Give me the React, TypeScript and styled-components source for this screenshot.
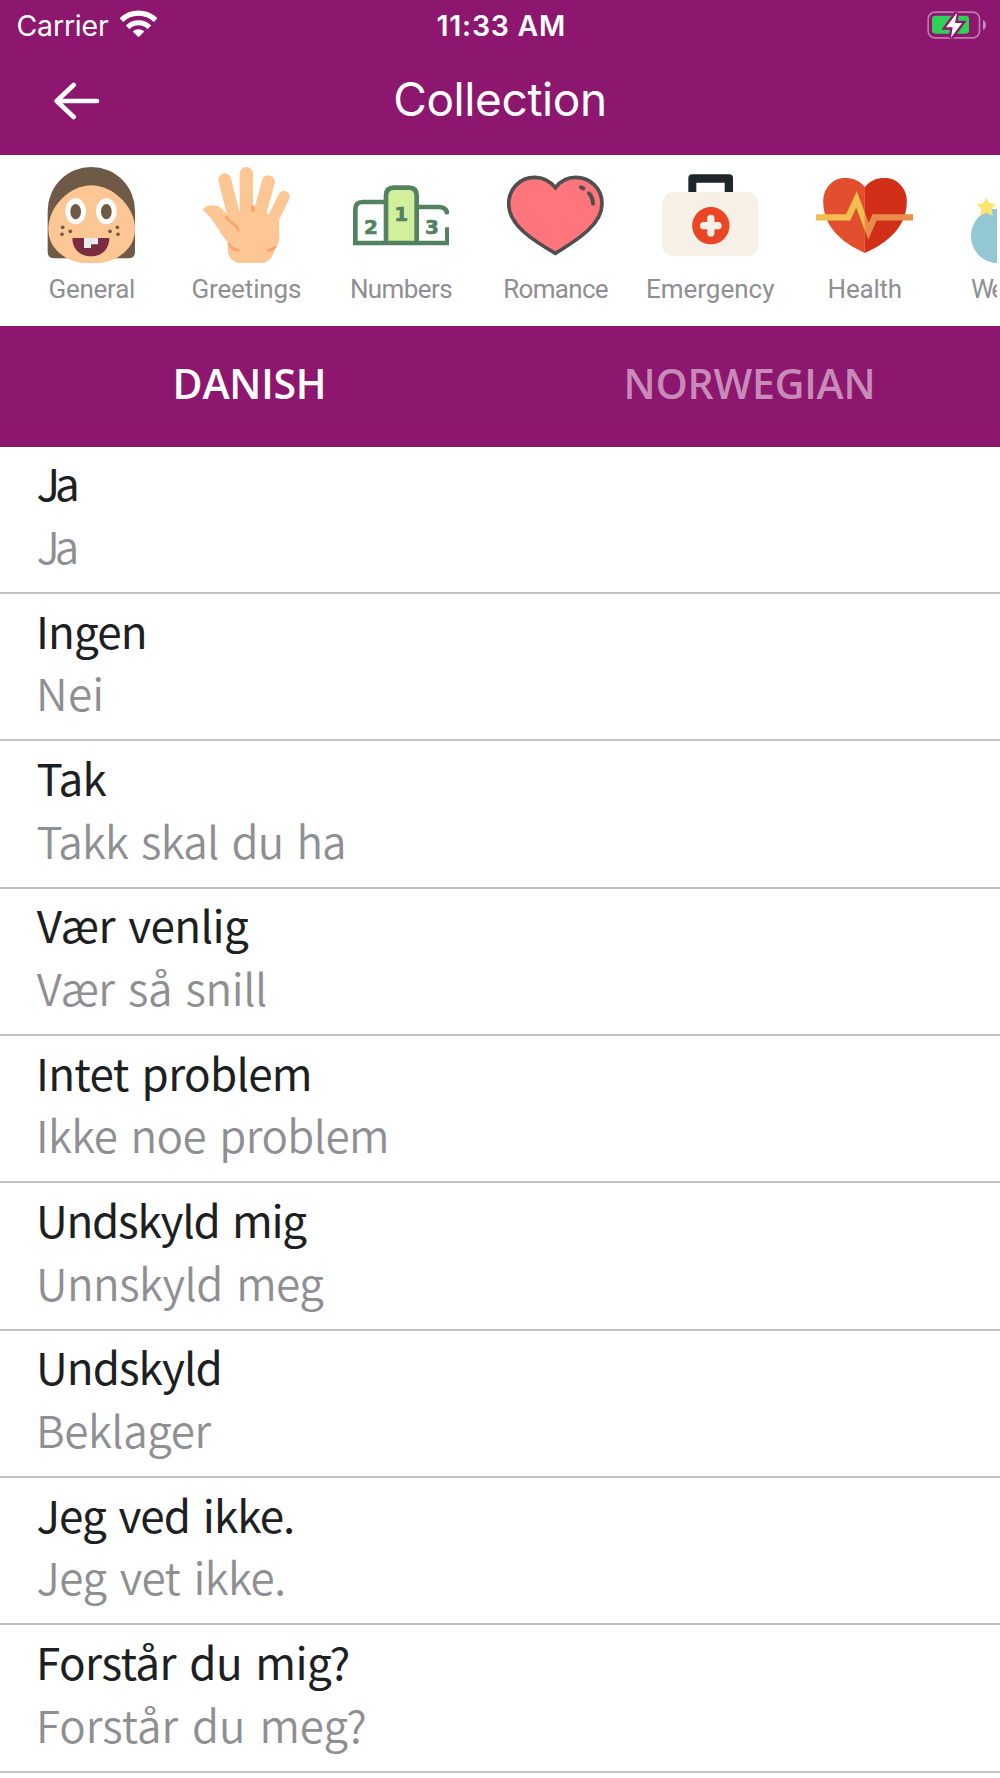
import React from 'react';
import styled, { createGlobalStyle } from 'styled-components';

const PURPLE = '#8d166f';

const GlobalStyle = createGlobalStyle`
  * { box-sizing: border-box; }
  body { margin: 0; background: #fff; }
`;

const Screen = styled.main`
  display: flex;
  flex-direction: column;
  width: 1000px;
  height: 1778px;
  overflow: hidden;
  background: #fff;
  font-family: 'Open Sans', 'Noto Sans', sans-serif;
`;

const Header = styled.header`
  display: flex;
  flex-direction: column;
  flex: none;
  height: 154.7px;
  background: ${PURPLE};
  color: #fff;
  font-family: Inter, 'Liberation Sans', sans-serif;
`;

const StatusBar = styled.div`
  display: grid;
  grid-template-columns: 1fr auto 1fr;
  align-items: center;
  height: 51px;
  padding: 0 14px 0 16.5px;
  font-size: 28.5px;
  line-height: 51px;
`;

const Carrier = styled.div`
  display: flex;
  align-items: center;
  gap: 11px;
  letter-spacing: -0.2px;

  svg { margin-top: -3px; }
`;

const Clock = styled.div`
  font-weight: 600;
  letter-spacing: 0.7px;
`;

const BatterySlot = styled.div`
  display: flex;
  justify-content: flex-end;
  padding-bottom: 2px;
`;

const NavBar = styled.nav`
  display: grid;
  grid-template-columns: 1fr auto 1fr;
  align-items: center;
  height: 98px;
  padding: 0 54px;
`;

const BackButton = styled.button`
  display: flex;
  width: 46px;
  padding: 2px 0 0;
  border: 0;
  background: none;
`;

const Title = styled.h1`
  margin: 0;
  padding-bottom: 2px;
  font-size: 46px;
  font-weight: 380;
  line-height: 96px;
  letter-spacing: -0.4px;
`;

const Tray = styled.section`
  display: flex;
  flex: none;
  width: 997.3px;
  height: 171.3px;
  padding: 12px 0 0 14.5px;
  overflow: hidden;
`;

const Category = styled.div<{ $clipped?: boolean }>`
  display: flex;
  flex: none;
  flex-direction: column;
  align-items: ${(p) => (p.$clipped ? 'flex-start' : 'center')};
  width: ${(p) => (p.$clipped ? '55.6px' : '154.6px')};
  padding-left: ${(p) => (p.$clipped ? '29px' : '0')};
  overflow: hidden;
`;

const CategoryIcon = styled.svg`
  flex: none;
  width: 96.7px;
  height: 96.7px;
`;

const CategoryLabel = styled.span<{ $tracking?: number }>`
  margin-top: 8.5px;
  color: #8f8f93;
  font-family: Roboto, 'Open Sans', sans-serif;
  font-size: 26px;
  line-height: 34px;
  letter-spacing: ${(p) => p.$tracking ?? 0}px;
  white-space: nowrap;
`;

const Digit = styled.text`
  fill: #52825f;
  stroke: #52825f;
  stroke-width: 2px;
  font-family: 'DejaVu Sans', sans-serif;
  font-size: 60px;
  font-weight: 700;
  text-anchor: middle;
`;

const Tabs = styled.div`
  display: grid;
  grid-template-columns: 1fr 1fr;
  flex: none;
  height: 120.7px;
  background: ${PURPLE};
`;

const Tab = styled.button<{ $active?: boolean }>`
  padding: 0 1px 6px 0;
  border: 0;
  background: none;
  color: ${(p) => (p.$active ? '#fff' : '#c88bb8')};
  font-family: inherit;
  font-size: 41px;
  font-weight: 600;
  line-height: 56px;
  letter-spacing: -0.2px;
`;

const PhraseList = styled.ul`
  display: flex;
  flex-direction: column;
  margin: 0;
  padding: 0;
  list-style: none;
`;

const Phrase = styled.li`
  display: flex;
  flex: none;
  flex-direction: column;
  height: 147.35px;
  padding: 4.6px 0 0 36px;
  border-bottom: 2px solid #c3c3c5;
  font-family: 'Noto Sans CJK JP', 'Open Sans', sans-serif;
`;

const Line = styled.span<{ $muted?: boolean; $tracking: number; $inset?: number }>`
  padding-left: ${(p) => p.$inset ?? 0}px;
  color: ${(p) => (p.$muted ? '#8f8f93' : '#1d1f23')};
  font-size: 44px;
  font-weight: ${(p) => (p.$muted ? 350 : 400)};
  line-height: 62.7px;
  letter-spacing: ${(p) => p.$tracking}px;
  word-spacing: 4px;
  white-space: nowrap;
`;

const WifiIcon = () => (
  <svg width="37" height="28" viewBox="360.5 29 111 84">
    <g fill="none" stroke="#fff" strokeWidth="16">
      <path d="M364.7 59.7A72.5 72.5 0 0 1 467.3 59.7" />
      <path d="M383.5 81A45.5 45.5 0 0 1 448.5 81" strokeWidth="15.5" />
    </g>
    <path d="M416 111L398.5 93.5A26 26 0 0 1 433.5 93.5Z" fill="#fff" />
  </svg>
);

const BatteryIcon = () => (
  <svg width="59" height="28" viewBox="384 31 177 84">
    <rect x="387.5" y="34.5" width="154" height="77" rx="20" fill="none" stroke="#fff" strokeOpacity=".42" strokeWidth="5" />
    <rect x="399" y="45" width="111" height="54" rx="10" fill="#30d158" />
    <path d="M552 58Q561 62 561 73Q561 84 552 88Z" fill="#fff" fillOpacity=".5" />
    <path d="M474 36L441 80H461L456 111L489 67H468Z" fill={PURPLE} stroke={PURPLE} strokeWidth="14" />
    <path d="M474 36L441 80H461L456 111L489 67H468Z" fill="#fff" />
  </svg>
);

const ArrowIcon = () => (
  <svg width="46" height="38" viewBox="164 245 138 114" fill="none" stroke="#fff" strokeWidth="14" strokeLinecap="round" strokeLinejoin="round">
    <path d="M223 254L172 302L223 350M172 302H293" />
  </svg>
);

const FaceIcon = () => (
  <CategoryIcon viewBox="71 50 290 290">
    <path d="M85 181A131 131 0 0 1 347 181V304Q347 324 327 324H105Q85 324 85 304Z" fill="#6f5947" />
    <path d="M216 105C277 105 347 165 347 237C347 300 287 340 216 340C145 340 87 300 87 237C87 165 155 105 216 105Z" fill="#fcc795" />
    <g fill="#fff">
      <ellipse cx="169" cy="183" rx="31" ry="39" />
      <ellipse cx="261" cy="183" rx="31" ry="39" />
    </g>
    <g fill="#6f5947">
      <ellipse cx="169" cy="184" rx="16" ry="23" />
      <ellipse cx="261" cy="184" rx="16" ry="23" />
      <circle cx="130" cy="231" r="5.5" />
      <circle cx="128" cy="252" r="5.5" />
      <circle cx="153" cy="243" r="5.5" />
      <circle cx="272" cy="243" r="5.5" />
      <circle cx="294" cy="231" r="5.5" />
      <circle cx="296" cy="252" r="5.5" />
    </g>
    <path d="M159 263H270C270 298 246 318 215 318C184 318 159 298 159 263Z" fill="#7c2b40" />
    <path d="M194 263H236V282H215V293H194Z" fill="#e8eeee" />
    <path d="M215 263V283" stroke="#d3dadb" strokeWidth="2" />
  </CategoryIcon>
);

const HandIcon = () => (
  <CategoryIcon viewBox="535 50 290 290">
    <g fill="none" stroke="#fcc795" strokeLinecap="round">
      <path d="M680 70V220" strokeWidth="40" />
      <path d="M615 88L650 225" strokeWidth="38" />
      <path d="M746 94L712 220" strokeWidth="39" />
      <path d="M793 139L752 222" strokeWidth="35" />
    </g>
    <path d="M549 178C562 162 590 160 606 175L640 208L661 182H700L740 188L779 212C776 232 782 256 777 274C774 286 768 290 764 302C755 330 738 339 720 340H670C642 339 624 322 625 296V277C612 262 598 240 584 218C572 199 562 191 549 178Z" fill="#fcc795" />
    <g fill="none" stroke="#faa570" strokeWidth="9" strokeLinecap="round">
      <path d="M619 200C626 216 651 219 656 240" />
      <path d="M628 281Q638 299 656 300" />
      <path d="M746 300Q758 299 766 291" />
      <path d="M700 170V180" strokeWidth="11" />
    </g>
  </CategoryIcon>
);

const PodiumIcon = () => (
  <CategoryIcon viewBox="98 50 290 290">
    <path d="M197 278V136Q197 112 221 112H265Q289 112 289 136V278Z" fill="#d2ef9c" />
    <g fill="none" stroke="#52825f" strokeWidth="14">
      <path d="M197 155H127Q105 155 105 178V278H381V231" />
      <path d="M197 278V136Q197 112 221 112H265Q289 112 289 136V278" />
      <path d="M289 170H355Q379 170 381 192" />
    </g>
    <Digit x="152" y="251">2</Digit>
    <Digit x="243" y="213">1</Digit>
    <Digit x="335" y="251">3</Digit>
  </CategoryIcon>
);

const RomanceIcon = () => (
  <CategoryIcon viewBox="562 50 290 290">
    <g stroke="#4f4f4f" strokeWidth="11">
      <path d="M707 112C690 91 668 81 645 81C600 81 567 117 567 160C567 225 640 270 707 309C780 265 847 220 847 160C847 115 812 81 768 81C745 81 722 92 707 112Z" fill="#ff757c" />
      <path d="M784 111L791 114M808 129Q820 143 820 160" fill="none" strokeWidth="12" strokeLinecap="round" />
    </g>
  </CategoryIcon>
);

const FirstAidIcon = () => (
  <CategoryIcon viewBox="125 50 290 290">
    <path d="M204 126V84Q204 72 216 72H326Q338 72 338 84V126H313V97H228V126Z" fill="#1d262a" />
    <rect x="125" y="125" width="290" height="193" rx="35" fill="#f7f0e6" />
    <circle cx="271.5" cy="226" r="56" fill="#ea4524" />
    <path d="M250 226H293M271.5 204V248" stroke="#f7f0e6" strokeWidth="22" strokeLinecap="round" />
  </CategoryIcon>
);

const HealthIcon = () => (
  <CategoryIcon viewBox="588.5 50 290 290">
    <clipPath id="pulseStart"><rect x="580" y="50" width="155" height="290" /></clipPath>
    <clipPath id="pulseEnd"><rect x="735" y="50" width="155" height="290" /></clipPath>
    <path d="M735 110C718 90 700 83 675 83C637 83 610 115 610 153C610 225 660 275 735 308Z" fill="#e24f2e" />
    <path d="M735 110C752 90 770 83 795 83C833 83 861 115 861 153C861 225 810 275 735 308Z" fill="#d22f18" />
    <g fill="none" strokeWidth="19" strokeMiterlimit="10">
      <path d="M588 201H685L710 147L746 243L764 201H880" stroke="#f0bf50" clipPath="url(#pulseStart)" />
      <path d="M588 201H685L710 147L746 243L764 201H880" stroke="#e98c4a" clipPath="url(#pulseEnd)" />
    </g>
  </CategoryIcon>
);

const MoonIcon = () => (
  <CategoryIcon viewBox="1053 50 290 290">
    <path d="M1110 176H1140V339H1135A82 82 0 0 1 1094 186Z" fill="#93c7d4" />
    <path d="M1099 141L1107.500 158L1129 162L1114 175L1118 197L1099 187L1080 197L1084 175L1069 162L1090.500 158Z" fill="#ffe46e" />
  </CategoryIcon>
);

const categories = [
  { label: 'General', Icon: FaceIcon, tracking: -0.27 },
  { label: 'Greetings', Icon: HandIcon, tracking: -0.13 },
  { label: 'Numbers', Icon: PodiumIcon, tracking: -0.6 },
  { label: 'Romance', Icon: RomanceIcon, tracking: -0.7 },
  { label: 'Emergency', Icon: FirstAidIcon, tracking: 0 },
  { label: 'Health', Icon: HealthIcon, tracking: -0.2 },
  { label: 'We', Icon: MoonIcon, tracking: -2.5, clipped: true },
];

type Wording = { text: string; tracking: number; inset?: number };

const phrases: { from: Wording; to: Wording }[] = [
  { from: { text: 'Ja', tracking: -5, inset: 0.5 }, to: { text: 'Ja', tracking: -5, inset: 0.5 } },
  { from: { text: 'Ingen', tracking: -0.85 }, to: { text: 'Nei', tracking: 0.3 } },
  { from: { text: 'Tak', tracking: -0.75, inset: 0.5 }, to: { text: 'Takk skal du ha', tracking: -0.8, inset: 0.5 } },
  { from: { text: 'Vær venlig', tracking: -0.55, inset: 0.7 }, to: { text: 'Vær så snill', tracking: -0.4, inset: 0.7 } },
  { from: { text: 'Intet problem', tracking: -0.73 }, to: { text: 'Ikke noe problem', tracking: -0.58 } },
  { from: { text: 'Undskyld mig', tracking: -1.25 }, to: { text: 'Unnskyld meg', tracking: -0.5 } },
  { from: { text: 'Undskyld', tracking: -0.96 }, to: { text: 'Beklager', tracking: -0.45 } },
  { from: { text: 'Jeg ved ikke.', tracking: -1, inset: 0.5 }, to: { text: 'Jeg vet ikke.', tracking: -0.55, inset: 0.5 } },
  { from: { text: 'Forstår du mig?', tracking: -0.6 }, to: { text: 'Forstår du meg?', tracking: 0 } },
];

export default function App() {
  return (
    <>
      <GlobalStyle />
      <Screen>
        <Header>
          <StatusBar>
            <Carrier>
              Carrier
              <WifiIcon />
            </Carrier>
            <Clock>11:33 AM</Clock>
            <BatterySlot>
              <BatteryIcon />
            </BatterySlot>
          </StatusBar>
          <NavBar>
            <BackButton aria-label="Back">
              <ArrowIcon />
            </BackButton>
            <Title>Collection</Title>
          </NavBar>
        </Header>
        <Tray>
          {categories.map(({ label, Icon, tracking, clipped }) => (
            <Category key={label} $clipped={clipped}>
              <Icon />
              <CategoryLabel $tracking={tracking}>{label}</CategoryLabel>
            </Category>
          ))}
        </Tray>
        <Tabs>
          <Tab $active>DANISH</Tab>
          <Tab>NORWEGIAN</Tab>
        </Tabs>
        <PhraseList>
          {phrases.map(({ from, to }) => (
            <Phrase key={from.text}>
              <Line $tracking={from.tracking} $inset={from.inset}>{from.text}</Line>
              <Line $muted $tracking={to.tracking} $inset={to.inset}>{to.text}</Line>
            </Phrase>
          ))}
        </PhraseList>
      </Screen>
    </>
  );
}
